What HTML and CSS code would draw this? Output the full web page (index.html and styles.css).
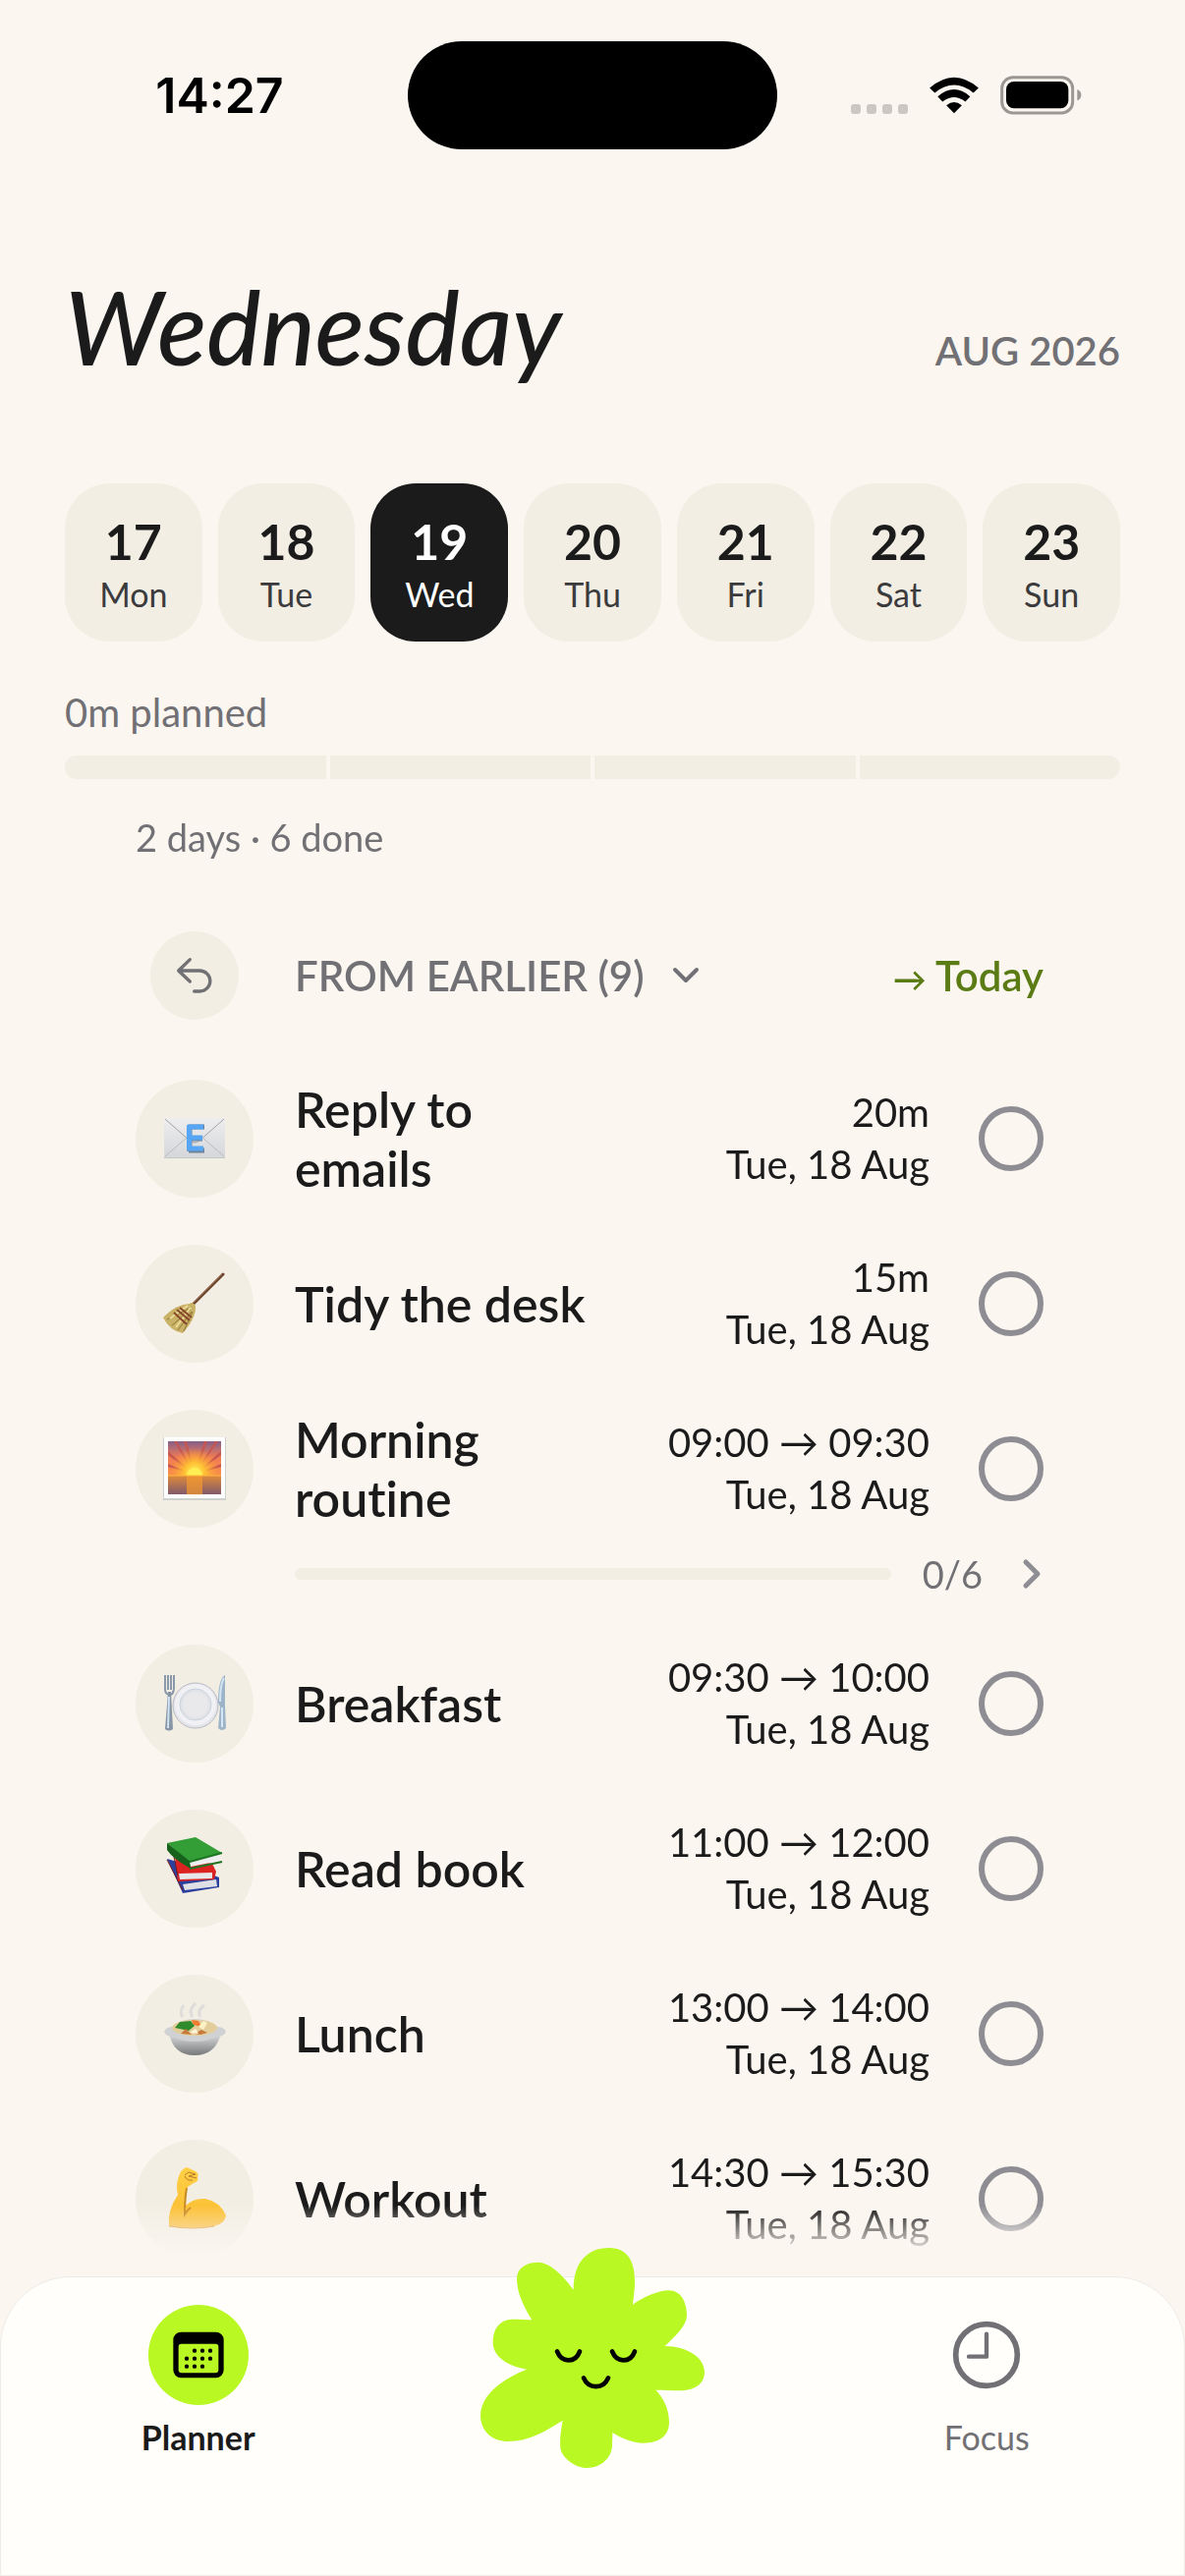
FILE: index.html
```
<!DOCTYPE html>
<html lang="en">
<head>
  <meta charset="UTF-8">
  <meta name="viewport" content="width=device-width, initial-scale=1">
  <title>Planner</title>
  <link rel="stylesheet" href="styles.css">
</head>
<body>
  <div class="status">
    <span class="clock">14:27</span>
    <span class="island"></span>
    <span class="signals">
      <svg width="58" height="10" viewBox="0 0 58 10" fill="#cbc7c2">
        <rect width="10" height="10" rx="3"/><rect x="16" width="10" height="10" rx="3"/>
        <rect x="32" width="10" height="10" rx="3"/><rect x="48" width="10" height="10" rx="3"/>
      </svg>
      <svg class="wifi" width="50" height="38" viewBox="316 84 152 116">
        <path d="M316 119Q392 53 468 119L452 134Q392 86 332 134Z"/>
        <path d="M341 146Q392 102 442 146L427 162Q392 134 356 162Z"/>
        <path d="M368 173Q392 153 416 173L392 198Z"/>
      </svg>
      <svg class="battery" width="83" height="40" viewBox="533 83 249 120">
        <rect x="538" y="88" width="216" height="109" rx="34" fill="none" stroke="#9b9792" stroke-width="9"/>
        <rect x="551" y="101" width="190" height="82" rx="24"/>
        <path d="M768 125Q780 130 780 142T768 159Z" fill="#9b9792"/>
      </svg>
    </span>
  </div>

  <header class="header">
    <h1>Wednesday</h1>
    <span class="month">AUG 2026</span>
  </header>

  <div class="days">
    <button class="day"><b>17</b>Mon</button>
    <button class="day"><b>18</b>Tue</button>
    <button class="day active"><b>19</b>Wed</button>
    <button class="day"><b>20</b>Thu</button>
    <button class="day"><b>21</b>Fri</button>
    <button class="day"><b>22</b>Sat</button>
    <button class="day"><b>23</b>Sun</button>
  </div>

  <div class="planned">
    <p>0m planned</p>
    <div class="load"><i></i><i></i><i></i><i></i></div>
  </div>

  <main class="tasks">
    <p class="summary">2 days · 6 done</p>

    <div class="section">
      <button class="undo" aria-label="Undo">
        <svg width="40" height="40" viewBox="114 112 120 120" fill="none" stroke="#717075" stroke-width="10" stroke-linecap="round" stroke-linejoin="round">
          <path d="M160 123L125 157L160 190M125 157H190a31 31 0 0 1 0 63H173"/>
        </svg>
      </button>
      <button class="toggle">FROM EARLIER (9)
        <svg width="28" height="18" viewBox="0 0 28 18" fill="none" stroke="#717075" stroke-width="4" stroke-linecap="round" stroke-linejoin="round"><path d="M3 3L14 14L25 3"/></svg>
      </button>
      <button class="today"><span class="arrow">→</span> Today</button>
    </div>

    <ul class="list">
      <li>
        <div class="task">
          <span class="icon">
            <svg viewBox="0 0 64 64">
              <defs><linearGradient id="paper" x2="0" y2="1"><stop stop-color="#eeeef0"/><stop offset="1" stop-color="#d5d6d9"/></linearGradient></defs>
              <rect x="1" y="11" width="62" height="41" rx="1" fill="url(#paper)"/>
              <path d="M2 50L24 31M62 50L40 31" stroke="#b9bbbe" stroke-width="1"/>
              <path d="M2 12L27 34Q32 38 37 34L62 12" fill="none" stroke="#a0a2a6" stroke-width="1"/>
              <path d="M1 51.500H63" stroke="#c3c8c8"/>
              <path d="M26 20H42M26 32H40M26 44H42M27 19V45" stroke="#6f8295" stroke-width="5"/>
              <path d="M25 20H41M25 31H40M25 42H41M26.500 18V44" stroke="#57a6f5" stroke-width="5"/>
            </svg>
          </span>
          <label class="name" for="t1">Reply to emails</label>
          <span class="time">20m<br>Tue, 18 Aug</span>
          <input type="checkbox" id="t1">
        </div>
      </li>
      <li>
        <div class="task">
          <span class="icon">
            <svg viewBox="0 0 64 64">
              <path d="M61 2L30 33" stroke="#6b432f" stroke-width="3" stroke-linecap="round"/>
              <path d="M60 2L31 31" stroke="#99674a" stroke-width="1"/>
              <path d="M27 32Q30 29 33 34Q34 46 20 62Q7 60 0 46Q14 32 27 32Z" fill="#c9b266"/>
              <path d="M26 37L4 48M28 38L9 54M29 40L15 59M30 40L21 60" stroke="#8d7838" stroke-width="1"/>
              <path d="M25 34L7 47M28 36L13 56" stroke="#ecdc98" stroke-width="2"/>
              <path d="M17 36L29 46M14 38L27 49M11 41L24 53" stroke="#89482b" stroke-width="2"/>
            </svg>
          </span>
          <label class="name" for="t2">Tidy the desk</label>
          <span class="time">15m<br>Tue, 18 Aug</span>
          <input type="checkbox" id="t2">
        </div>
      </li>
      <li>
        <div class="task">
          <span class="icon">
            <svg viewBox="0 0 64 64">
              <defs>
                <linearGradient id="sky" x2="0" y2="1"><stop stop-color="#84608a"/><stop offset="0.300" stop-color="#f07a55"/><stop offset="1" stop-color="#ffa63c"/></linearGradient>
                <linearGradient id="sea" x2="0" y2="1"><stop stop-color="#e08a3a"/><stop offset="1" stop-color="#80596a"/></linearGradient>
                <radialGradient id="glow"><stop stop-color="#fff36b"/><stop offset="0.400" stop-color="#ffc334"/><stop offset="1" stop-color="#ff9c35" stop-opacity="0"/></radialGradient>
              </defs>
              <rect x="0" y="0" width="64" height="64" fill="#cdd0cc"/>
              <rect x="1" y="0" width="62" height="62" fill="#fff"/>
              <rect x="5" y="4" width="54" height="54" fill="url(#sky)"/>
              <path d="M32 38L5 14V18ZM32 38L5 27V30ZM32 38L11 4H14ZM32 38L21 4H24ZM32 38L42 4H45ZM32 38L53 4H56ZM32 38L59 14V18ZM32 38L59 27V30Z" fill="#c65650"/>
              <circle cx="32" cy="36" r="25" fill="url(#glow)"/>
              <path d="M24 39a8 8 0 0 1 16 0Z" fill="#ffef52"/>
              <rect x="5" y="39" width="54" height="19" fill="url(#sea)"/>
              <rect x="24" y="39" width="16" height="19" fill="#f59a2f" opacity="0.700"/>
              <path d="M5 39H59" stroke="#ffb640"/>
            </svg>
          </span>
          <label class="name" for="t3">Morning routine</label>
          <span class="time">09:00 → 09:30<br>Tue, 18 Aug</span>
          <input type="checkbox" id="t3">
        </div>
        <div class="steps">
          <span class="track"></span>
          <span>0/6</span>
          <svg width="20" height="32" viewBox="0 0 20 32" fill="none" stroke="#8e8d93" stroke-width="5" stroke-linecap="round" stroke-linejoin="round"><path d="M4 4L16 16L4 28"/></svg>
        </div>
      </li>
      <li>
        <div class="task">
          <span class="icon">
            <svg viewBox="0 0 64 64">
              <circle cx="33" cy="34" r="23" fill="#e4e5eb" stroke="#b9bbc4" stroke-width="1"/>
              <circle cx="33" cy="33" r="21" fill="#f1f1f5"/>
              <circle cx="33" cy="33" r="16" fill="#e1e3e9" stroke="#c9d3de" stroke-width="1"/>
              <circle cx="33" cy="33" r="13" fill="#e9e9ec"/>
              <path d="M2 3V17Q2 22 6 23T11 17V3M5 3V18M8 3V18" fill="none" stroke="#8999ab" stroke-width="2"/>
              <path d="M5 20H8L10 58Q6 61 2 58Z" fill="#8795a5"/>
              <path d="M6 25L5 57" stroke="#d1e4f5" stroke-width="2"/>
              <path d="M63 3Q56 7 56 31L58 35L56 57Q60 61 64 57L63 34Z" fill="#9db3c8"/>
              <path d="M62 6Q58 12 58 30M60 36V56" fill="none" stroke="#d4e6f5" stroke-width="2"/>
            </svg>
          </span>
          <label class="name" for="t4">Breakfast</label>
          <span class="time">09:30 → 10:00<br>Tue, 18 Aug</span>
          <input type="checkbox" id="t4">
        </div>
      </li>
      <li>
        <div class="task">
          <span class="icon">
            <svg viewBox="0 0 64 64">
              <path d="M4 22L20 57L57 51V41L25 28Z" fill="#2b3f9e"/>
              <path d="M20 48L54 43L55 50L22 54Z" fill="#dfe0e6"/>
              <path d="M12 19L50 27L54 35L52 43L15 45Z" fill="#db2321"/>
              <path d="M16 37L50 36L50 42L17 43Z" fill="#e8e8ea"/>
              <path d="M11 20L15 39M4 23L20 54" stroke="#7a1919" stroke-width="1"/>
              <path d="M4 6L33 0L60 16L28 26Z" fill="#329e35"/>
              <path d="M4 6L28 25V32Q10 22 4 13Z" fill="#16621d"/>
              <path d="M27 25L57 17L58 24L28 30Z" fill="#eeeef0"/>
              <path d="M27 25L60 16M27 32L60 25" stroke="#1d7524" stroke-width="2"/>
            </svg>
          </span>
          <label class="name" for="t5">Read book</label>
          <span class="time">11:00 → 12:00<br>Tue, 18 Aug</span>
          <input type="checkbox" id="t5">
        </div>
      </li>
      <li>
        <div class="task">
          <span class="icon">
            <svg viewBox="0 0 64 64">
              <defs><linearGradient id="pot" x2="0" y2="1"><stop stop-color="#e1e2e3"/><stop offset="1" stop-color="#77787a"/></linearGradient></defs>
              <path d="M20 15Q16 10 21 3M30 15Q25 9 33 1M38 15Q34 9 42 3" fill="none" stroke="#dedddb" stroke-width="3"/>
              <path d="M6 31Q10 54 32 54T59 31Z" fill="url(#pot)"/>
              <path d="M1 30Q3 25 10 25Q18 17 32 17T55 25Q62 25 64 30Q62 35 54 35Q46 40 32 40T10 35Q3 35 1 30Z" fill="#cfd1d2"/>
              <ellipse cx="32" cy="26" rx="23" ry="8" fill="#e3ce9b"/>
              <path d="M12 26L17 20L28 19L32 24L26 29Z" fill="#2f8b2b"/>
              <path d="M29 18L36 19L39 25L31 23Z" fill="#ef7b32"/>
              <path d="M36 25L41 19L45 21L41 28Z" fill="#fff1c6"/>
              <path d="M18 32L23 27L29 33ZM32 32L39 28L45 31L38 33Z" fill="#c87a3d"/>
              <path d="M27 31L33 27L36 32Z" fill="#fff6da"/>
            </svg>
          </span>
          <label class="name" for="t6">Lunch</label>
          <span class="time">13:00 → 14:00<br>Tue, 18 Aug</span>
          <input type="checkbox" id="t6">
        </div>
      </li>
      <li>
        <div class="task">
          <span class="icon">
            <svg viewBox="0 0 64 64">
              <defs><linearGradient id="skin" x2="0" y2="1"><stop stop-color="#ffd145"/><stop offset="1" stop-color="#f9b92f"/></linearGradient></defs>
              <path d="M6 60Q4 44 15 28Q13 20 15 12Q18 1 24 0L33 4Q37 7 35 10Q37 14 31 16L25 20Q22 28 23 39Q31 31 43 32Q58 35 64 49Q63 57 52 60Q28 64 6 60Z" fill="url(#skin)"/>
              <path d="M24 21Q22 32 22 48Q25 43 28 41" fill="none" stroke="#c98a22" stroke-width="2"/>
              <path d="M22 8L26 5L33 7L26 9L34 11M22 9Q24 14 30 13" fill="none" stroke="#b9792a" stroke-width="1"/>
              <path d="M6 60Q30 64 52 60" fill="none" stroke="#dc922b" stroke-width="1"/>
            </svg>
          </span>
          <label class="name" for="t7">Workout</label>
          <span class="time">14:30 → 15:30<br>Tue, 18 Aug</span>
          <input type="checkbox" id="t7">
        </div>
      </li>
    </ul>
  </main>

  <nav class="tabs">
    <a href="#planner" class="tab current">
      <span class="tab-icon">
        <svg width="52" height="48" viewBox="104 130 156 144">
          <rect x="105" y="132" width="154" height="140" rx="24"/>
          <rect x="121" y="168" width="122" height="89" rx="9" fill="#b9f822"/>
          <path d="M170 189h0M194 189h0M218 189h0M146 213h0M170 213h0M194 213h0M218 213h0M146 237h0M170 237h0M194 237h0" stroke="#000" stroke-width="13" stroke-linecap="round"/>
        </svg>
      </span>
      Planner
    </a>
    <button class="buddy" aria-label="Assistant">
      <svg width="228" height="224" viewBox="147 113 684 672">
        <path fill="#b9f822" d="M431 241C431 160 470 113 540 113C600 113 618 160 618 215C618 245 614 265 612 286C640 265 690 243 722 243C760 243 777 280 777 320C777 350 740 385 710 413C780 413 831 450 831 492C831 530 800 549 755 549C730 549 705 547 682 547C705 570 723 605 723 645C723 690 690 709 645 709C610 709 575 693 550 677C550 700 549 710 549 720C545 760 510 785 474 785C435 785 400 755 392 730C387 700 393 670 398 640C350 670 295 704 232 704C180 704 147 670 147 625C147 560 220 510 288 484C230 475 185 445 185 402C185 350 215 331 245 331C265 331 285 333 304 333C280 295 258 250 258 208C258 175 285 157 325 157C365 160 405 205 431 241Z"/>
        <path d="M381 429C395 465 437 465 450 429M549 429C563 465 605 465 618 429M462 510C477 545 522 545 537 510" fill="none" stroke="#000" stroke-width="14" stroke-linecap="round"/>
      </svg>
    </button>
    <a href="#focus" class="tab">
      <span class="tab-icon">
        <svg width="70" height="70" viewBox="91 97 210 210" fill="none" stroke="#717075" stroke-linecap="round" stroke-linejoin="round">
          <circle cx="196" cy="202" r="94" stroke-width="17"/>
          <path d="M196 138V207H142" stroke-width="13"/>
        </svg>
      </span>
      Focus
    </a>
  </nav>
</body>
</html>
```
FILE: styles.css
```
* {
  box-sizing: border-box;
}

body {
  margin: 0;
  min-height: 100vh;
  display: flex;
  flex-direction: column;
  background: #fbf6f0;
  color: #1b1b1b;
  font-family: Lato, Inter, sans-serif;
  font-variant-ligatures: none;
}

h1, p, ul {
  margin: 0;
  padding: 0;
}

button {
  border: none;
  background: none;
  padding: 0;
  margin: 0;
  font: inherit;
  color: inherit;
  cursor: pointer;
}

svg {
  display: block;
}

/* status bar */
.status {
  display: grid;
  grid-template-columns: 1fr 376px 1fr;
  align-items: center;
  margin-top: 42px;
}

.clock {
  padding-left: 32px;
  color: #000;
  font: 600 50px/60px Inter, sans-serif;
  text-align: center;
}

.island {
  height: 110px;
  border-radius: 55px;
  background: #000;
}

.signals {
  display: flex;
  align-items: center;
  justify-content: flex-end;
  gap: 22px;
  padding-right: 105px;
}

.signals svg:first-child {
  margin-top: 28px;
}

/* header */
.header {
  display: flex;
  align-items: baseline;
  justify-content: space-between;
  margin-top: 120px;
  padding: 0 66px;
}

h1 {
  font-size: 104px;
  line-height: 120px;
  font-weight: 500;
  font-style: italic;
}

.month {
  color: #717075;
  font-size: 40px;
  font-weight: 600;
}

.days {
  display: grid;
  grid-template-columns: repeat(7, 1fr);
  gap: 16px;
  margin-top: 100px;
  padding: 0 66px;
}

.day {
  padding: 29px 0 24px;
  border-radius: 46px;
  background: #f2eee3;
  color: #3b3a3d;
  font-size: 34px;
  line-height: 48px;
}

.day b {
  display: block;
  color: #1b1b1b;
  font-size: 50px;
  line-height: 60px;
}

.day.active {
  background: #1b1b1b;
  color: #fff;
}

.day.active b {
  color: #fff;
}

.planned {
  margin-top: 48px;
  padding: 0 66px;
  color: #717075;
  font-size: 40px;
  line-height: 48px;
}

.load {
  display: grid;
  grid-template-columns: repeat(4, 1fr);
  gap: 4px;
  height: 24px;
  margin-top: 20px;
  border-radius: 12px;
  overflow: hidden;
}

.load i {
  background: #f2eee3;
}

/* tasks */
.tasks {
  flex: 1;
  padding: 35px 144px 0 138px;
  -webkit-mask-image: linear-gradient(to top, transparent 22px, #000 72px);
  mask-image: linear-gradient(to top, transparent 22px, #000 72px);
}

.summary {
  color: #717075;
  font-size: 38px;
  line-height: 48px;
}

.section {
  display: grid;
  grid-template-columns: 120px 1fr auto;
  column-gap: 42px;
  align-items: center;
  margin-top: 72px;
  color: #717075;
  font-size: 42px;
  font-weight: 600;
}

.undo {
  display: grid;
  place-items: center;
  justify-self: center;
  width: 90px;
  height: 90px;
  border-radius: 50%;
  background: #f2eee3;
}

.toggle {
  display: flex;
  align-items: center;
  gap: 28px;
}

.today {
  color: #5b7c14;
}

.arrow {
  font-size: 34px;
}

.list {
  display: grid;
  gap: 48px;
  margin-top: 61px;
  list-style: none;
}

.task {
  display: grid;
  grid-template-columns: 120px 1fr 1fr 66px;
  align-items: center;
  height: 120px;
}

.icon {
  display: grid;
  place-items: center;
  height: 120px;
  border-radius: 50%;
  background: #f2eee3;
}

.icon svg {
  width: 64px;
  height: 64px;
}

.name {
  padding-left: 42px;
  font-size: 50px;
  font-weight: 600;
  line-height: 60px;
}

.time {
  padding-right: 50px;
  font-size: 40px;
  line-height: 53px;
  text-align: right;
  white-space: nowrap;
}

.task input {
  appearance: none;
  width: 66px;
  height: 66px;
  margin: 0;
  border: 6px solid #8e8d93;
  border-radius: 50%;
}

.task input:checked {
  background: #b9f822;
}

.steps {
  display: flex;
  align-items: center;
  margin-top: 23px;
  padding-left: 162px;
  color: #717075;
  font-size: 38px;
  line-height: 48px;
}

.track {
  flex: 1;
  height: 12px;
  margin-right: 32px;
  border-radius: 6px;
  background: #f2eee3;
}

.steps svg {
  margin: 0 2px 0 40px;
}

/* bottom tabs */
.tabs {
  display: grid;
  grid-template-columns: repeat(3, 1fr);
  justify-items: center;
  align-items: start;
  min-height: 305px;
  padding-top: 28px;
  border: 1px solid #eeebe6;
  border-radius: 72px 72px 0 0;
  background: #fffefa;
}

.tab {
  color: #717075;
  font-size: 34px;
  line-height: 48px;
  text-align: center;
  text-decoration: none;
}

.tab-icon {
  display: grid;
  place-items: center;
  width: 102px;
  height: 102px;
  margin: 0 auto 9px;
  border-radius: 50%;
}

.current {
  color: #1b1b1b;
  font-weight: 700;
}

.current .tab-icon {
  background: #b9f822;
}

.buddy {
  margin-top: -58px;
}
```
